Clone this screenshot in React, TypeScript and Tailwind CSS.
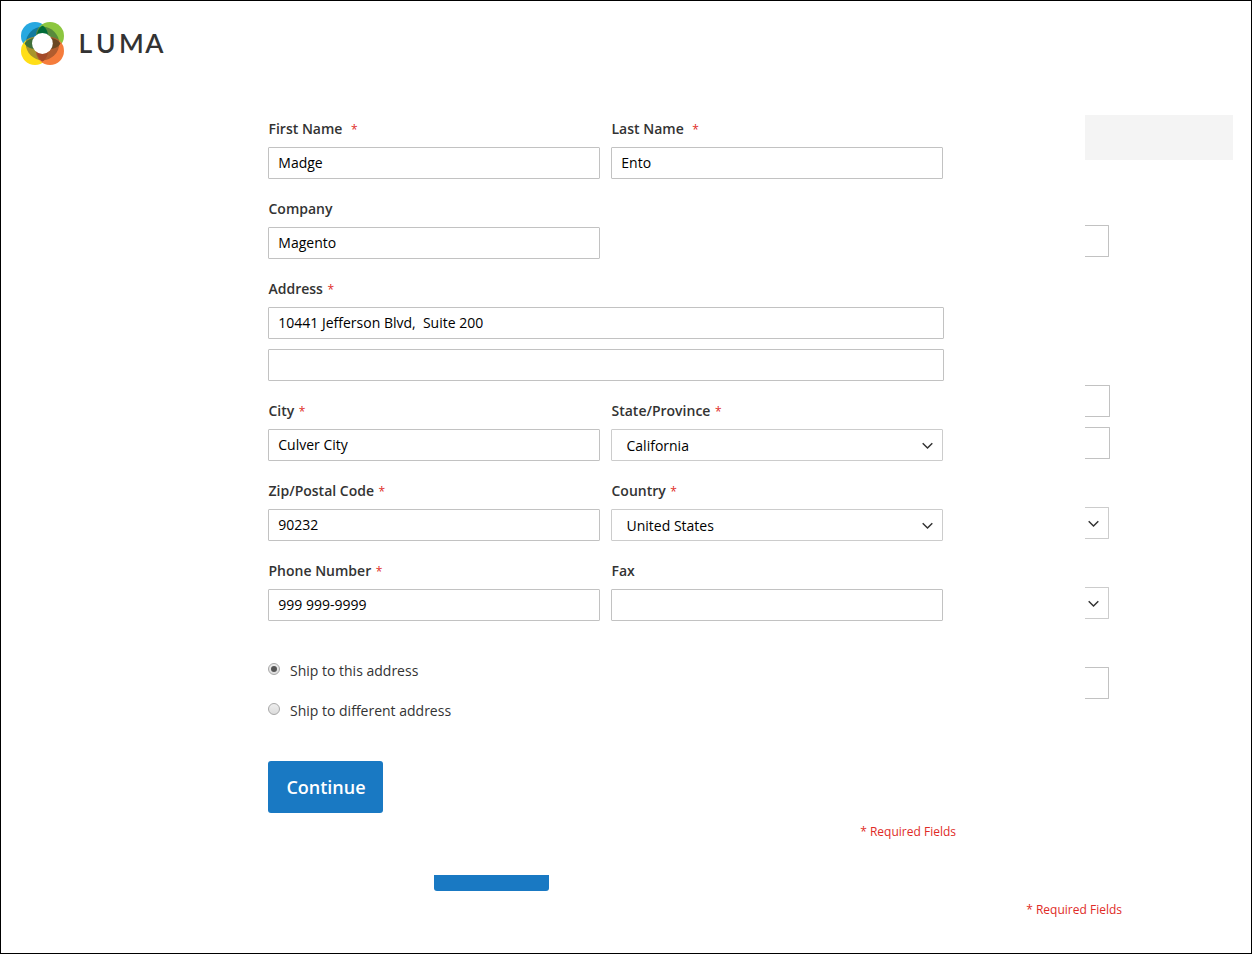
import { type ReactNode } from 'react';

function Logo() {
  return (
    <svg width="150" height="46" viewBox="20 21 150 46" role="img" aria-label="Luma">
      <defs>
        <clipPath id="tl"><circle cx="35" cy="36" r="14" /></clipPath>
        <clipPath id="tr"><circle cx="50" cy="36" r="14" /></clipPath>
        <clipPath id="bl"><circle cx="35" cy="51" r="14" /></clipPath>
        <clipPath id="br"><circle cx="50" cy="51" r="14" /></clipPath>
        <clipPath id="petal-tl"><circle cx="35" cy="36" r="13" /></clipPath>
        <clipPath id="petal-br"><circle cx="50" cy="51" r="13" /></clipPath>
      </defs>
      <circle cx="35" cy="36" r="14" fill="#27a8e0" />
      <circle cx="50" cy="36" r="14" fill="#8cc63f" />
      <circle cx="35" cy="51" r="14" fill="#ffde17" />
      <circle cx="50" cy="51" r="14" fill="#f57c3c" />
      <circle cx="42.5" cy="43.5" r="16.7" fill="#127a9e" clipPath="url(#tl)" />
      <circle cx="42.5" cy="43.5" r="16.7" fill="#588a3c" clipPath="url(#tr)" />
      <circle cx="42.5" cy="43.5" r="16.7" fill="#a8942c" clipPath="url(#bl)" />
      <circle cx="42.5" cy="43.5" r="16.7" fill="#b05c2e" clipPath="url(#br)" />
      <g clipPath="url(#petal-tl)">
        <circle cx="35" cy="51" r="13" fill="#40703a" />
        <circle cx="50" cy="36" r="13" fill="#006b38" />
      </g>
      <g clipPath="url(#petal-br)">
        <circle cx="50" cy="36" r="13" fill="#6b4722" />
        <circle cx="35" cy="51" r="13" fill="#a44a28" />
      </g>
      <circle cx="42.4" cy="43.5" r="10.4" fill="#fff" />
      <text
        x="78.4 96 119 145.2"
        y="53"
        fill="#333"
        className="font-['Lato',sans-serif] text-[26.5px] font-semibold"
      >
        LUMA
      </text>
    </svg>
  );
}

function Chevron() {
  return (
    <svg className="mt-0.5" width="12" height="8" viewBox="0 0 12 8" fill="none" stroke="#333" strokeWidth="1.5">
      <path d="M0.7 1.3 5.5 6 10.3 1.3" />
    </svg>
  );
}

function Label({ children, required, wide }: { children: ReactNode; required?: boolean; wide?: boolean }) {
  return (
    <span className="mb-2 flex h-5 items-center pl-[0.5px] text-sm font-semibold text-[#333]">
      {children}
      {required && (
        <span className={`mt-0.5 text-xs font-normal text-[#e02b27] ${wide ? 'ml-[8.5px]' : 'ml-[4.5px]'}`}>
          *
        </span>
      )}
    </span>
  );
}

const inputClass = 'block h-8 w-full rounded-[1px] border border-[#c2c2c2] bg-white px-[9.3px] pb-0.5 text-sm text-black outline-none';

function Field({ label, value = '', required, wide }: { label: string; value?: string; required?: boolean; wide?: boolean }) {
  return (
    <label className="block">
      <Label required={required} wide={wide}>{label}</Label>
      <input className={inputClass} defaultValue={value} />
    </label>
  );
}

function SelectField({ label, value }: { label: string; value: string }) {
  return (
    <div>
      <Label required>{label}</Label>
      <button className="flex h-8 w-full items-center justify-between rounded-[1px] border border-[#ccc] bg-white pr-2 pl-[14.5px] text-sm text-black">
        <span className="pt-0.5">{value}</span>
        <Chevron />
      </button>
    </div>
  );
}

function Radio({ label, checked }: { label: string; checked?: boolean }) {
  return (
    <div className="flex h-5 items-center text-sm text-[#333]">
      <span className="mr-[10px] mb-1 flex size-3 items-center justify-center rounded-full border border-[#a8a8a8] bg-linear-to-b from-[#eee] to-[#dcdcdc]">
        {checked && <span className="size-1.5 rounded-full bg-[#555]" />}
      </span>
      {label}
    </div>
  );
}

function Edge({ wide, select }: { wide?: boolean; select?: boolean }) {
  return (
    <div
      className={`flex h-8 items-center rounded-r-[1px] border-y border-r pl-[3px] ${wide ? 'w-[25px]' : 'w-6'} ${select ? 'border-[#ccc]' : 'border-[#c2c2c2]'}`}
    >
      {select && <Chevron />}
    </div>
  );
}

export default function App() {
  return (
    <div className="flex h-[954px] w-[1252px] flex-col overflow-hidden border border-black bg-white font-['Open_Sans','Liberation_Sans',sans-serif]">
      <header className="h-[114px] shrink-0 pt-5 pl-[19px]">
        <Logo />
      </header>
      <main className="flex h-[760px] shrink-0 pl-[267px]">
        <form className="w-[676px] shrink-0 pt-1" onSubmit={(e) => e.preventDefault()}>
          <div className="grid grid-cols-[332px_332px] gap-x-[11px] gap-y-5">
            <Field label="First Name" value="Madge" required wide />
            <Field label="Last Name" value="Ento" required wide />
            <Field label="Company" value="Magento" />
            <div className="col-span-2 w-[676px]">
              <Field label="Address" value={'10441 Jefferson Blvd,\u00a0 Suite 200'} required />
              <input className={`${inputClass} mt-2.5`} aria-label="Address line 2" />
            </div>
            <Field label="City" value="Culver City" required />
            <SelectField label="State/Province" value="California" />
            <Field label="Zip/Postal Code" value="90232" required />
            <SelectField label="Country" value="United States" />
            <Field label="Phone Number" value="999 999-9999" required />
            <Field label="Fax" />
          </div>
          <div className="mt-10 flex flex-col gap-5">
            <Radio label="Ship to this address" checked />
            <Radio label="Ship to different address" />
          </div>
          <button className="mt-10 block h-[52px] w-[115px] rounded-[3px] bg-[#1979c3] pl-px text-lg font-semibold text-white">
            Continue
          </button>
          <p className="-mr-3 mt-[11px] text-right text-xs leading-4 text-[#e02b27]">* Required Fields</p>
        </form>
        <aside className="ml-[141px] w-[148px]">
          <div className="mb-[65px] h-[45px] bg-[#f4f4f4]" />
          <Edge />
          <div className="mt-32 mb-12 flex flex-col gap-2.5">
            <Edge wide />
            <Edge wide />
          </div>
          <div className="flex flex-col gap-12">
            <Edge select />
            <Edge select />
            <Edge />
          </div>
        </aside>
      </main>
      <footer className="flex justify-between pr-[129px] pl-[433px]">
        <div className="h-4 w-[115px] rounded-b-[3px] bg-[#1979c3]" />
        <p className="mt-[27px] text-xs leading-4 text-[#e02b27]">* Required Fields</p>
      </footer>
    </div>
  );
}
